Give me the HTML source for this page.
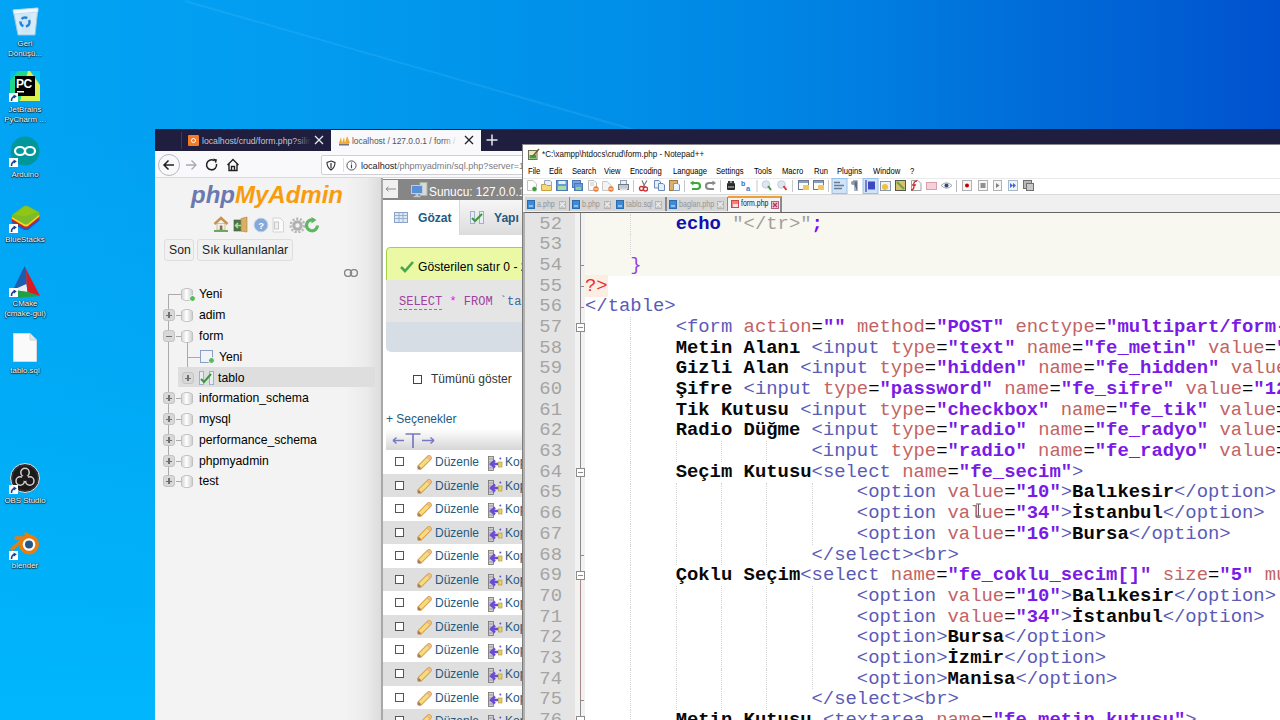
<!DOCTYPE html>
<html><head><meta charset="utf-8">
<style>
*{box-sizing:border-box;margin:0;padding:0}
html,body{width:1280px;height:720px;overflow:hidden}
body{position:relative;font-family:"Liberation Sans",sans-serif;background:#0a8ae2}
.A{position:absolute}
#bg{position:absolute;left:0;top:0;width:1280px;height:720px;
background:linear-gradient(180deg,rgba(0,180,250,0) 129px,rgba(0,176,248,.6) 400px,rgba(0,182,252,1) 720px) 0 0/155px 720px no-repeat,
linear-gradient(90deg,#02a4f4 0px,#029cf0 300px,#008ee8 640px,#0080e2 850px,#0070da 1000px,#0060d4 1150px,#0052ce 1280px);}
#bg2{display:none}
.streak{position:absolute;left:185px;top:0;width:470px;height:2px;background:rgba(150,220,255,.12);transform-origin:0 0;transform:rotate(16deg)}
.lbl{position:absolute;width:56px;left:-3px;text-align:center;color:#fff;font-size:7.9px;line-height:10px;text-shadow:0 0 1px rgba(0,0,0,.9),0 1px 1px rgba(0,0,0,.8),1px 0 1px rgba(0,0,0,.5)}
.sc{position:absolute;width:8px;height:8px;background:#fff;border:.5px solid #e0e0e0}
.sc:after{content:"";position:absolute;left:1.5px;top:1px;width:4px;height:4px;border-top:1.6px solid #1a3f94;border-right:1.6px solid #1a3f94;border-radius:0 3px 0 0}
/* browser */
.mono{font-family:"Liberation Mono",monospace}
/* npp */
.npp-font{font-family:"Liberation Sans",sans-serif}
#code{position:absolute;left:585px;top:213.5px;font-family:"Liberation Mono",monospace;font-size:18.89px;line-height:20.69px;white-space:pre;color:#000}
#nums{position:absolute;left:520px;width:42px;top:213.5px;font-family:"Liberation Mono",monospace;font-size:18.89px;line-height:20.69px;white-space:pre;color:#a4a4a4;text-align:right}
.t{color:#5a5ab8}.a{color:#c26464}.s{color:#7a1ae6;font-weight:bold}.b{font-weight:bold;color:#080808}.g{color:#a0a0a0}
.k{color:#1010b0;font-weight:bold}.sb{color:#8000ff;font-weight:bold}.pu{color:#9040e0}.pe{color:#e83030;background:#fdeee4}
.gd{position:absolute;width:0;height:20.69px;border-left:1px dotted #d4d4d4}
.fk{position:absolute;left:580px;width:4px;height:1px;background:#8c8c8c}
.fb{position:absolute;left:576px;width:9px;height:9px;border:1px solid #8c8c8c;background:#fff}
.fb:after{content:"";position:absolute;left:1px;top:3px;width:5px;height:1px;background:#8c8c8c}
.mi{position:absolute;top:165px;font-size:8.9px;color:#000;line-height:12px;transform:scaleX(.86);transform-origin:0 0;white-space:nowrap}
.ti{position:absolute;width:12px;height:11px;top:180px}
.sep{position:absolute;top:179px;width:1px;height:13px;background:#c8c8c8}
.ntab{position:absolute;top:197px;height:14px;background:#d6d6d6;font-size:8.4px;color:#949494;line-height:14px;white-space:nowrap}
.ntab:after{content:"";position:absolute;right:-2px;top:0;width:2px;height:14px;background:#8a8a8a}
.ntab i{position:absolute;left:1.5px;top:3px;width:8px;height:8.5px;background:#3d8ad8;border:1px solid #2a6cb0}
.ntab i:after{content:"";position:absolute;left:1px;top:3.5px;width:4px;height:2.5px;background:#8cc0f0}
.ntab span{position:absolute;left:11.5px;top:0;transform:scaleX(.85);transform-origin:0 0}
.ntab b{position:absolute;right:3px;top:4px;width:7.5px;height:7.5px;background:#c8c8c8;border:1px solid #b4b4b4}
.ntab b:before,.ntab b:after{content:"";position:absolute;left:-0.5px;top:2.2px;width:6.5px;height:1.3px;background:#f4f4f4;transform:rotate(45deg)}
.ntab b:after{transform:rotate(-45deg)}
.tree{position:absolute;font-size:12.2px;color:#000;line-height:14px;white-space:nowrap}
.pm{position:absolute;width:12px;height:12px;border-radius:3px;background:#d8d8d8;border:1px solid #c4c4c4}
.pm:before{content:"";position:absolute;left:2px;top:4.5px;width:6px;height:1.6px;background:#707070}
.pm.p:after{content:"";position:absolute;left:4.2px;top:2.2px;width:1.6px;height:6px;background:#707070}
.cyl{position:absolute;width:12px;height:13px;background:linear-gradient(90deg,#d8d8d8,#fff 45%,#d0d0d0);border:1px solid #c0c0c0;border-radius:6px/3px}
.row{position:absolute;left:383px;width:140px;height:23.6px}
.row .cb{position:absolute;left:12px;top:7px;width:9px;height:9px;border:1px solid #555;background:#fff}
.row .pen{position:absolute;left:35px;top:5px;width:4px;height:16px;background:linear-gradient(90deg,#f0b83c,#f8d878);transform:rotate(45deg);border-radius:1px}
.row .dz{position:absolute;left:52px;top:5px;font-size:12px;color:#235a81;line-height:15px}
.row .cp{position:absolute;left:105px;top:5px;width:13px;height:14px}
.row .kp{position:absolute;left:122px;top:5px;font-size:12px;color:#235a81;line-height:15px}
</style></head><body>
<div id="bg"></div><div id="bg2"></div><div class="streak"></div>

<!-- desktop icons -->
<div class="A" style="left:0;top:0;width:54px;height:580px">
  <!-- recycle bin -->
  <svg class="A" style="left:11px;top:5px" width="30" height="31" viewBox="0 0 30 31">
    <path d="M2 5 L27 3 L24 30 L7 30 Z" fill="#d6ecf8" stroke="#9cc4dc" stroke-width="1"/>
    <path d="M2 5 L27 3 L27 7 L3 9Z" fill="#eef8fd" stroke="#b0d0e4" stroke-width=".6"/>
    <path d="M9 10 L20 9 L19 28 L11 28Z" fill="#c4e2f4" opacity=".6"/>
    <circle cx="14" cy="17" r="4.5" fill="none" stroke="#2a80d8" stroke-width="2.4" stroke-dasharray="6 2.5"/>
  </svg>
  <div class="lbl" style="top:39px">Geri<br>Dönüşü...</div>
  <!-- pycharm -->
  <svg class="A" style="left:10px;top:71px" width="30" height="30" viewBox="0 0 30 30">
    <rect x="0" y="0" width="30" height="30" fill="#21d789"/>
    <path d="M18 0 L30 0 L30 30 L10 30Z" fill="#dcf050"/>
    <path d="M20 0 L30 0 L30 14Z" fill="#07c3f2"/>
    <path d="M0 0 L8 0 L0 10Z" fill="#07b8f0"/>
    <rect x="5" y="5" width="20" height="20" fill="#000"/>
    <text x="6" y="17" font-family="Liberation Sans" font-weight="bold" font-size="12" fill="#fff" letter-spacing="-0.5">PC</text>
    <rect x="7" y="20" width="7" height="1.5" fill="#fff"/>
  </svg>
  <svg class="A" style="left:9px;top:93px" width="9" height="9" viewBox="0 0 9 9"><rect x="0" y="0" width="9" height="9" fill="#fff"/><path d="M2.5 8 Q2.5 4 5.5 3.5" fill="none" stroke="#1a3f94" stroke-width="1.6"/><path d="M4.5 1.5 L7.8 3.2 L4.8 5.8Z" fill="#1a3f94"/></svg>
  <div class="lbl" style="top:105px">JetBrains<br>PyCharm ...</div>
  <!-- arduino -->
  <svg class="A" style="left:10px;top:136px" width="30" height="30" viewBox="0 0 30 30">
    <circle cx="15" cy="15" r="14.5" fill="#00979c"/>
    <ellipse cx="10" cy="15" rx="5" ry="4" fill="none" stroke="#fff" stroke-width="2.2"/>
    <ellipse cx="20" cy="15" rx="5" ry="4" fill="none" stroke="#fff" stroke-width="2.2"/>
  </svg>
  <svg class="A" style="left:9px;top:158px" width="9" height="9" viewBox="0 0 9 9"><rect x="0" y="0" width="9" height="9" fill="#fff"/><path d="M2.5 8 Q2.5 4 5.5 3.5" fill="none" stroke="#1a3f94" stroke-width="1.6"/><path d="M4.5 1.5 L7.8 3.2 L4.8 5.8Z" fill="#1a3f94"/></svg>
  <div class="lbl" style="top:170px">Arduino</div>
  <!-- bluestacks -->
  <svg class="A" style="left:10px;top:202px" width="31" height="28" viewBox="0 0 31 28">
    <path d="M2 15 Q1 13 3 12 L14 4 Q16 3 18 4 L29 10 Q30 12 29 13 L18 22 Q16 23 14 22Z" transform="translate(0,6)" fill="#1a5ad8"/>
    <path d="M2 15 Q1 13 3 12 L14 4 Q16 3 18 4 L29 10 Q30 12 29 13 L18 22 Q16 23 14 22Z" transform="translate(0,4)" fill="#d42020"/>
    <path d="M2 15 Q1 13 3 12 L14 4 Q16 3 18 4 L29 10 Q30 12 29 13 L18 22 Q16 23 14 22Z" transform="translate(0,2)" fill="#f8d820"/>
    <path d="M2 15 Q1 13 3 12 L14 4 Q16 3 18 4 L29 10 Q30 12 29 13 L18 22 Q16 23 14 22Z" fill="#7cbc28"/>
    <path d="M4 13 L14 5 Q16 4 18 5 L27 10 L16 14Z" fill="#98cc10" opacity=".7"/>
  </svg>
  <svg class="A" style="left:9px;top:224px" width="9" height="9" viewBox="0 0 9 9"><rect x="0" y="0" width="9" height="9" fill="#fff"/><path d="M2.5 8 Q2.5 4 5.5 3.5" fill="none" stroke="#1a3f94" stroke-width="1.6"/><path d="M4.5 1.5 L7.8 3.2 L4.8 5.8Z" fill="#1a3f94"/></svg>
  <div class="lbl" style="top:235px">BlueStacks</div>
  <!-- cmake -->
  <svg class="A" style="left:10px;top:266px" width="32" height="32" viewBox="0 0 32 32">
    <path d="M14.5 0 L16 3 L16.5 18 L3 24Z" fill="#1f5cb0"/>
    <path d="M3 24 L16.5 18 L17.5 26Z" fill="#e8eef4"/>
    <path d="M16 3 L30 30 L17.5 26 L16.5 18Z" fill="#d81c24"/>
    <path d="M5 24 L17.5 26 L30 30 L7 32Z" fill="#23a041"/>
  </svg>
  <svg class="A" style="left:9px;top:288px" width="9" height="9" viewBox="0 0 9 9"><rect x="0" y="0" width="9" height="9" fill="#fff"/><path d="M2.5 8 Q2.5 4 5.5 3.5" fill="none" stroke="#1a3f94" stroke-width="1.6"/><path d="M4.5 1.5 L7.8 3.2 L4.8 5.8Z" fill="#1a3f94"/></svg>
  <div class="lbl" style="top:299px">CMake<br>(cmake-gui)</div>
  <!-- tablo.sql -->
  <svg class="A" style="left:13px;top:333px" width="24" height="29" viewBox="0 0 24 29">
    <path d="M0.5 0.5 L17 0.5 L23.5 7 L23.5 28.5 L0.5 28.5Z" fill="#fafafa" stroke="#d8d8d8"/>
    <path d="M17 0.5 L17 7 L23.5 7" fill="#e6e6e6" stroke="#d0d0d0"/>
  </svg>
  <div class="lbl" style="top:366px">tablo.sql</div>
  <!-- OBS -->
  <svg class="A" style="left:10px;top:463px" width="30" height="30" viewBox="0 0 30 30">
    <circle cx="15" cy="15" r="14.5" fill="#302e31" stroke="#e0e0e0" stroke-width="1"/>
    <circle cx="15" cy="15" r="12" fill="#1a1a1a"/>
    <circle cx="15" cy="9.5" r="4.2" fill="none" stroke="#d0d0d0" stroke-width="1.5"/><circle cx="10.2" cy="18" r="4.2" fill="none" stroke="#d0d0d0" stroke-width="1.5"/><circle cx="19.8" cy="18" r="4.2" fill="none" stroke="#d0d0d0" stroke-width="1.5"/><circle cx="15" cy="15" r="3" fill="#1a1a1a"/>
  </svg>
  <svg class="A" style="left:9px;top:485px" width="9" height="9" viewBox="0 0 9 9"><rect x="0" y="0" width="9" height="9" fill="#fff"/><path d="M2.5 8 Q2.5 4 5.5 3.5" fill="none" stroke="#1a3f94" stroke-width="1.6"/><path d="M4.5 1.5 L7.8 3.2 L4.8 5.8Z" fill="#1a3f94"/></svg>
  <div class="lbl" style="top:496px">OBS Studio</div>
  <!-- blender -->
  <svg class="A" style="left:5px;top:525px" width="40" height="32" viewBox="0 0 40 32">
    <path d="M7 24 L16 16 M11 13 H25 M21 9 L29 14" stroke="#e87d0d" stroke-width="3.4" stroke-linecap="round"/>
    <circle cx="24" cy="19.5" r="10" fill="#e87d0d"/>
    <circle cx="24" cy="19.5" r="6.3" fill="#fff"/>
    <circle cx="24" cy="19.5" r="4" fill="#265787"/>
  </svg>
  <svg class="A" style="left:9px;top:551px" width="9" height="9" viewBox="0 0 9 9"><rect x="0" y="0" width="9" height="9" fill="#fff"/><path d="M2.5 8 Q2.5 4 5.5 3.5" fill="none" stroke="#1a3f94" stroke-width="1.6"/><path d="M4.5 1.5 L7.8 3.2 L4.8 5.8Z" fill="#1a3f94"/></svg>
  <div class="lbl" style="top:561px">blender</div>
</div>

<!-- ================= BROWSER ================= -->
<div class="A" style="left:155px;top:129px;width:1125px;height:591px;background:#f3f3f3;overflow:hidden">
  <!-- tab strip -->
  <div class="A" style="left:0;top:0;width:1125px;height:22px;background:#1f1e3e"></div>
  <div class="A" style="left:26px;top:3px;width:1px;height:17px;background:#3a3958"></div>
  <!-- tab 1 -->
  <div class="A" style="left:33px;top:6px;width:11px;height:11px;background:#f07c2c;border-radius:1px"></div>
  <div class="A" style="left:36px;top:9px;width:5px;height:5px;border:1px solid #fff;border-radius:50%"></div>
  <div class="A" style="left:47px;top:5px;width:110px;height:14px;overflow:hidden;font-size:8.7px;line-height:14px;color:#c4c4d0;white-space:nowrap">localhost/crud/form.php?siline</div>
  <div class="A" style="left:140px;top:5px;width:18px;height:14px;background:linear-gradient(90deg,rgba(31,30,62,0),#1f1e3e 90%)"></div>
  <svg class="A" style="left:159px;top:6px" width="10" height="10" viewBox="0 0 10 10"><path d="M1 1 L9 9 M9 1 L1 9" stroke="#e8e8f0" stroke-width="1.3"/></svg>
  <!-- active tab -->
  <div class="A" style="left:176px;top:1px;width:150px;height:22px;background:#f9f9fb"></div>
  <svg class="A" style="left:182px;top:6px" width="14" height="11" viewBox="0 0 14 11"><path d="M2 8 L4 2 L5 8Z M5 8 L7 2 L8 8Z M8 8 L10 1 L13 8Z" fill="#f0a830"/><rect x="2" y="8.5" width="10" height="2" fill="#505060" opacity=".8"/></svg>
  <div class="A" style="left:197px;top:5px;width:108px;height:14px;overflow:hidden;font-size:8.4px;line-height:14px;color:#55555c;white-space:nowrap">localhost / 127.0.0.1 / form / tablo</div>
  <div class="A" style="left:288px;top:5px;width:18px;height:14px;background:linear-gradient(90deg,rgba(249,249,251,0),#f9f9fb 85%)"></div>
  <svg class="A" style="left:309px;top:6px" width="10" height="10" viewBox="0 0 10 10"><path d="M1 1 L9 9 M9 1 L1 9" stroke="#20202a" stroke-width="1.3"/></svg>
  <svg class="A" style="left:331px;top:5px" width="12" height="12" viewBox="0 0 12 12"><path d="M6 0.5 V11.5 M0.5 6 H11.5" stroke="#e8e8f0" stroke-width="1.5"/></svg>
  <!-- toolbar -->
  <div class="A" style="left:0;top:22px;width:1125px;height:27px;background:#f9f9fb;border-bottom:1px solid #dadade"></div>
  <div class="A" style="left:3px;top:25px;width:22px;height:22px;border:1px solid #b8b8c0;border-radius:50%"></div>
  <svg class="A" style="left:6px;top:28px" width="16" height="16" viewBox="0 0 16 16"><path d="M13 8 H3 M7.5 3.5 L3 8 L7.5 12.5" fill="none" stroke="#202020" stroke-width="1.5"/></svg>
  <svg class="A" style="left:28px;top:28px" width="16" height="16" viewBox="0 0 16 16"><path d="M3 8 H13 M8.5 3.5 L13 8 L8.5 12.5" fill="none" stroke="#a8a8b0" stroke-width="1.3"/></svg>
  <svg class="A" style="left:49px;top:28px" width="16" height="16" viewBox="0 0 16 16"><path d="M12.5 7 A5 5 0 1 1 10 3.5" fill="none" stroke="#202020" stroke-width="1.5"/><path d="M9 1.5 L13 2.5 L12 6.5Z" fill="#202020"/></svg>
  <svg class="A" style="left:70px;top:28px" width="16" height="16" viewBox="0 0 16 16"><path d="M2.5 8 L8 2.5 L13.5 8 M4 7 V13.5 H12 V7 M6.5 13.5 V9.5 H9.5 V13.5" fill="none" stroke="#202020" stroke-width="1.4"/></svg>
  <!-- url bar -->
  <div class="A" style="left:166px;top:26px;width:1000px;height:20px;background:#fff;border:1px solid #cfcfd6;border-radius:2px"></div>
  <div class="A" style="left:188px;top:29px;width:1px;height:14px;background:#e0e0e4"></div>
  <svg class="A" style="left:171px;top:31px" width="10" height="11" viewBox="0 0 10 11"><path d="M5 1 L9 2.5 Q9 7.5 5 10 Q1 7.5 1 2.5Z" fill="none" stroke="#303038" stroke-width="1.1"/><path d="M5 3 V8.5" stroke="#303038" stroke-width="1.2"/></svg>
  <svg class="A" style="left:190.5px;top:31px" width="11" height="11" viewBox="0 0 11 11"><circle cx="5.5" cy="5.5" r="4.6" fill="none" stroke="#404048" stroke-width=".9"/><path d="M5.5 4.5 V8.3 M5.5 2.5 V3.4" stroke="#404048" stroke-width="1.1"/></svg>
  <div class="A" style="left:206px;top:30px;font-size:9.1px;line-height:15px;color:#202028;white-space:nowrap">localhost<span style="color:#7a7a84">/phpmyadmin/sql.php?server=1&amp;db=form</span></div>

  <!-- content -->
  <div class="A" style="left:0;top:49px;width:227px;height:542px;background:#f3f3f3"></div>
  <div class="A" style="left:190px;top:49px;width:36px;height:542px;background:linear-gradient(90deg,rgba(20,20,40,0),rgba(20,20,40,.035) 60%,rgba(20,20,40,.1))"></div>
  <div class="A" style="left:226px;top:49px;width:2px;height:542px;background:#a8a8a8"></div>
</div>

<!-- phpMyAdmin left -->
<div class="A" style="left:191px;top:181px;font-size:24px;line-height:28px;font-weight:bold;font-style:italic;letter-spacing:0px;white-space:nowrap"><span style="color:#6c78af">php</span><span style="color:#f89c0e">MyAdmin</span></div>
<!-- pma icons -->
<svg class="A" style="left:213px;top:216px" width="108" height="17" viewBox="0 0 108 17">
  <path d="M1.5 8 L8 2 L14.5 8" fill="none" stroke="#c8924e" stroke-width="2.4"/><rect x="4" y="7.5" width="8" height="6.5" fill="#f6f0e4" stroke="#c0a070" stroke-width=".6"/><rect x="6.8" y="9.5" width="2.6" height="4.5" fill="#807060"/><rect x="1" y="14" width="14" height="2" fill="#6aaa58"/>
  <rect x="21" y="4" width="8" height="11" fill="#4a7a44" stroke="#505050" stroke-width=".6"/><path d="M28 2.5 L34 1 V16 L28 15Z" fill="#dcae62" stroke="#b08040" stroke-width=".6"/><path d="M22.5 9.5 H28 M25 7 L22.5 9.5 L25 12" stroke="#a8e0a0" stroke-width="1.6" fill="none"/>
  <circle cx="48" cy="9" r="6.8" fill="#86a8d8" stroke="#b8cce8" stroke-width="1"/><text x="45.2" y="12.8" font-size="9.5" font-weight="bold" fill="#fff" font-family="Liberation Sans">?</text>
  <path d="M60 2 H67 L70.5 5.5 V16 H60Z" fill="#fafafa" stroke="#d4d4d4"/><rect x="61.5" y="6" width="4" height="7" fill="#f0f0f0" stroke="#c8c8c8"/>
  <circle cx="84.5" cy="9.5" r="5.2" fill="#b0b0b0"/><circle cx="84.5" cy="9.5" r="6.8" fill="none" stroke="#b8b8b8" stroke-width="2.4" stroke-dasharray="2.2 1.6"/><circle cx="84.5" cy="9.5" r="2.2" fill="#f0f0f0"/>
  <path d="M104.5 9.5 A5.5 5.5 0 1 1 100.5 4" fill="none" stroke="#5cb860" stroke-width="3.2"/><path d="M98.5 1 L103.5 4 L98.5 7.5Z" fill="#5cb860"/>
</svg>
<div class="A" style="left:164px;top:239px;width:30px;height:22px;background:#f1f1f1;border:1px solid #dedede;border-radius:3px"></div>
<div class="A" style="left:169px;top:243px;font-size:12.2px;line-height:15px;color:#222">Son</div>
<div class="A" style="left:197px;top:239px;width:96px;height:22px;background:#f1f1f1;border:1px solid #dedede;border-radius:3px"></div>
<div class="A" style="left:202px;top:243px;font-size:12.2px;line-height:15px;color:#222;white-space:nowrap">Sık kullanılanlar</div>
<svg class="A" style="left:344px;top:269px" width="14" height="8" viewBox="0 0 14 8"><rect x="0.5" y="0.5" width="7" height="7" rx="3.5" fill="none" stroke="#888" stroke-width="1.6"/><rect x="6.5" y="0.5" width="7" height="7" rx="3.5" fill="none" stroke="#888" stroke-width="1.6"/></svg>

<!-- tree -->
<div class="A" style="left:168px;top:294px;width:1px;height:188px;background:#aaaaaa"></div>
<div class="A" style="left:168px;top:294px;width:13px;height:1px;background:#aaaaaa"></div>
<div class="A" style="left:176px;top:315px;width:5px;height:1px;background:#aaaaaa"></div>
<div class="A" style="left:176px;top:336px;width:5px;height:1px;background:#aaaaaa"></div>
<div class="A" style="left:176px;top:398px;width:5px;height:1px;background:#aaaaaa"></div>
<div class="A" style="left:176px;top:419px;width:5px;height:1px;background:#aaaaaa"></div>
<div class="A" style="left:176px;top:440px;width:5px;height:1px;background:#aaaaaa"></div>
<div class="A" style="left:176px;top:461px;width:5px;height:1px;background:#aaaaaa"></div>
<div class="A" style="left:176px;top:481px;width:5px;height:1px;background:#aaaaaa"></div>
<div class="A" style="left:187px;top:343px;width:1px;height:35px;background:#aaaaaa"></div>
<div class="A" style="left:187px;top:357px;width:13px;height:1px;background:#aaaaaa"></div>
<div class="A" style="left:178px;top:367px;width:197px;height:20px;background:#dedede"></div>

<div class="cyl" style="left:181px;top:288px"></div><div class="A" style="left:189px;top:295px;width:7px;height:7px;border-radius:50%;background:#5cb85c;border:1.5px solid #fff"></div>
<div class="tree" style="left:199px;top:287px">Yeni</div>
<div class="pm p" style="left:163px;top:309px"></div><div class="cyl" style="left:181px;top:309px"></div><div class="tree" style="left:199px;top:308px">adim</div>
<div class="pm" style="left:163px;top:330px"></div><div class="cyl" style="left:181px;top:330px"></div><div class="tree" style="left:199px;top:329px">form</div>
<div class="A" style="left:200px;top:350px;width:13px;height:13px;background:#f0f4fa;border:1px solid #8aa0c0"></div><div class="A" style="left:208px;top:357px;width:7px;height:7px;border-radius:50%;background:#5cb85c;border:1.5px solid #fff"></div>
<div class="tree" style="left:219px;top:350px">Yeni</div>
<div class="pm p" style="left:182px;top:372px"></div>
<svg class="A" style="left:199px;top:371px" width="15" height="14" viewBox="0 0 15 14"><rect x="0.5" y="0.5" width="4" height="13" fill="#e8eef8" stroke="#a0b0c8"/><rect x="10.5" y="0.5" width="4" height="13" fill="#e8eef8" stroke="#a0b0c8"/><path d="M2 8 L5 11 L12 3" fill="none" stroke="#3a9a3a" stroke-width="2"/></svg>
<div class="tree" style="left:218px;top:371px">tablo</div>
<div class="pm p" style="left:163px;top:392px"></div><div class="cyl" style="left:181px;top:392px"></div><div class="tree" style="left:199px;top:391px">information_schema</div>
<div class="pm p" style="left:163px;top:413px"></div><div class="cyl" style="left:181px;top:413px"></div><div class="tree" style="left:199px;top:412px">mysql</div>
<div class="pm p" style="left:163px;top:434px"></div><div class="cyl" style="left:181px;top:434px"></div><div class="tree" style="left:199px;top:433px">performance_schema</div>
<div class="pm p" style="left:163px;top:455px"></div><div class="cyl" style="left:181px;top:455px"></div><div class="tree" style="left:199px;top:454px">phpmyadmin</div>
<div class="pm p" style="left:163px;top:475px"></div><div class="cyl" style="left:181px;top:475px"></div><div class="tree" style="left:199px;top:474px">test</div>

<!-- pma right content -->
<div class="A" style="left:383px;top:178px;width:140px;height:542px;background:#fff;overflow:hidden">
  <div class="A" style="left:0;top:1px;width:140px;height:21px;background:#868686"></div>
  <div class="A" style="left:0;top:2px;width:15px;height:18px;background:#f0f0f0"></div>
  <svg class="A" style="left:2px;top:7px" width="12" height="8" viewBox="0 0 12 8"><path d="M1 4 H11 M1 4 L3.5 1.8 M1 4 L3.5 6.2" stroke="#8a8a8a" stroke-width="1" fill="none"/></svg>
  <svg class="A" style="left:28px;top:4px" width="17" height="16" viewBox="0 0 17 16"><rect x="9" y="0.5" width="7" height="13" fill="#d8dcd8" stroke="#a8b0a8"/><rect x="0.5" y="3.5" width="11" height="8" fill="#5a90d8" stroke="#c0ccd8"/><rect x="4.5" y="12" width="3" height="2" fill="#c0c8d0"/><rect x="2.5" y="14" width="7" height="1.2" fill="#c0c8d0"/></svg>
  <div class="A" style="left:45.5px;top:4.5px;font-size:13.2px;line-height:18px;color:#fff;white-space:nowrap;transform:scaleX(.9);transform-origin:0 0">Sunucu: 127.0.0.1</div>
  <div class="A" style="left:76px;top:22px;width:70px;height:35px;background:linear-gradient(180deg,#f6f6f6,#dcdcdc);border-left:1px solid #d8d8d8"></div>
  <svg class="A" style="left:11px;top:34px" width="14" height="11" viewBox="0 0 14 11"><rect x=".5" y=".5" width="13" height="10" fill="#dde8f4" stroke="#8aa4c8"/><path d="M.5 3.5 H13.5 M.5 6.5 H13.5 M5 .5 V10.5 M9 .5 V10.5" stroke="#8aa4c8" stroke-width=".8"/></svg>
  <div class="A" style="left:35px;top:33px;font-size:12.1px;line-height:15px;color:#235a81;font-weight:bold">Gözat</div>
  <svg class="A" style="left:87px;top:33px" width="14" height="13" viewBox="0 0 14 13"><rect x=".5" y=".5" width="4" height="12" fill="#e8eef8" stroke="#a0b0c8"/><rect x="9.5" y=".5" width="4" height="12" fill="#e8eef8" stroke="#a0b0c8"/><path d="M2 7 L5 10 L12 3" fill="none" stroke="#3a9a3a" stroke-width="2"/></svg>
  <div class="A" style="left:111px;top:33px;font-size:12.1px;line-height:15px;color:#235a81;font-weight:bold">Yapı</div>
  <div class="A" style="left:3px;top:69px;width:140px;height:34px;background:#ebf8a4;border:1px solid #a2d246;border-radius:4px 0 0 0"></div>
  <svg class="A" style="left:17px;top:83px" width="14" height="12" viewBox="0 0 14 12"><path d="M1 6 L5 10 L13 1" fill="none" stroke="#4aa84a" stroke-width="2.6"/></svg>
  <div class="A" style="left:35px;top:82px;font-size:12.1px;line-height:15px;color:#000;white-space:nowrap">Gösterilen satır 0 - 24</div>
  <div class="A" style="left:3px;top:102px;width:140px;height:42px;background:#e5e5e5"></div>
  <div class="A" style="left:3px;top:144px;width:140px;height:30px;background:#d7dde4;border-radius:0 0 0 5px"></div>
  <div class="A" style="left:16px;top:117px;font-family:'Liberation Mono',monospace;font-size:12px;line-height:14px;color:#a040a0;white-space:nowrap">SELECT <span style="color:#ff00ff">*</span> FROM <span style="color:#3a6aa0">`tablo`</span></div>
  <div class="A" style="left:16px;top:131px;width:43px;height:0;border-top:1px dashed #a070a0"></div>
  <div class="A" style="left:30px;top:197px;width:9px;height:9px;border:1px solid #444;background:#fff"></div>
  <div class="A" style="left:48px;top:194px;font-size:12px;line-height:15px;color:#333;white-space:nowrap">Tümünü göster</div>
  <div class="A" style="left:3px;top:234px;font-size:12px;line-height:15px;color:#235a81;white-space:nowrap">+ Seçenekler</div>
  <div class="A" style="left:3px;top:251px;width:140px;height:21px;background:linear-gradient(180deg,#ffffff,#d6d6d6)"></div>
  <svg class="A" style="left:9px;top:253px" width="46" height="18" viewBox="0 0 46 18"><path d="M1 9.5 H12 M1 9.5 L4.5 6.5 M1 9.5 L4.5 12.5" stroke="#7878c0" stroke-width="1.5" fill="none"/><path d="M13.5 3 H28.5 M21 3 V17" stroke="#7878c0" stroke-width="1.7" fill="none"/><path d="M30 9.5 H42 M42 9.5 L38.5 6.5 M42 9.5 L38.5 12.5" stroke="#7878c0" stroke-width="1.5" fill="none"/></svg>
</div>
<div class="row" style="top:450.0px;background:#ffffff"><div class="cb"></div><svg class="A" style="left:33px;top:5px" width="16" height="16" viewBox="0 0 16 16"><path d="M4 12 L13 3" stroke="#d8a040" stroke-width="5.5" stroke-linecap="round"/><path d="M4 12 L13 3" stroke="#f6dc80" stroke-width="3.6" stroke-linecap="round"/><path d="M1.5 14.5 L2.5 10.5 L5.5 13.5Z" fill="#a87858"/><path d="M11.5 1.8 L14.2 4.5" stroke="#f0b0a0" stroke-width="2"/></svg><div class="dz">Düzenle</div><svg class="A" style="left:105px;top:6px" width="15" height="15" viewBox="0 0 15 15"><rect x="0.5" y="0.5" width="5" height="14" fill="#d0d0d0" stroke="#707070" stroke-width=".8"/><path d="M1 3 H5 M1 6 H5 M1 9 H5 M1 12 H5" stroke="#909090" stroke-width=".8"/><path d="M3 8 H10 M7 4.5 L3 8 L7 11.5" stroke="#6a4ad8" stroke-width="2.4" fill="none"/><rect x="10.5" y="6" width="3.5" height="5" fill="#e8d060" stroke="#a09040" stroke-width=".6"/><circle cx="12.3" cy="2.5" r="1" fill="#5a5ad0"/></svg><div class="kp">Kopyala</div></div>
<div class="row" style="top:473.6px;background:#dfdfdf"><div class="cb"></div><svg class="A" style="left:33px;top:5px" width="16" height="16" viewBox="0 0 16 16"><path d="M4 12 L13 3" stroke="#d8a040" stroke-width="5.5" stroke-linecap="round"/><path d="M4 12 L13 3" stroke="#f6dc80" stroke-width="3.6" stroke-linecap="round"/><path d="M1.5 14.5 L2.5 10.5 L5.5 13.5Z" fill="#a87858"/><path d="M11.5 1.8 L14.2 4.5" stroke="#f0b0a0" stroke-width="2"/></svg><div class="dz">Düzenle</div><svg class="A" style="left:105px;top:6px" width="15" height="15" viewBox="0 0 15 15"><rect x="0.5" y="0.5" width="5" height="14" fill="#d0d0d0" stroke="#707070" stroke-width=".8"/><path d="M1 3 H5 M1 6 H5 M1 9 H5 M1 12 H5" stroke="#909090" stroke-width=".8"/><path d="M3 8 H10 M7 4.5 L3 8 L7 11.5" stroke="#6a4ad8" stroke-width="2.4" fill="none"/><rect x="10.5" y="6" width="3.5" height="5" fill="#e8d060" stroke="#a09040" stroke-width=".6"/><circle cx="12.3" cy="2.5" r="1" fill="#5a5ad0"/></svg><div class="kp">Kopyala</div></div>
<div class="row" style="top:497.1px;background:#ffffff"><div class="cb"></div><svg class="A" style="left:33px;top:5px" width="16" height="16" viewBox="0 0 16 16"><path d="M4 12 L13 3" stroke="#d8a040" stroke-width="5.5" stroke-linecap="round"/><path d="M4 12 L13 3" stroke="#f6dc80" stroke-width="3.6" stroke-linecap="round"/><path d="M1.5 14.5 L2.5 10.5 L5.5 13.5Z" fill="#a87858"/><path d="M11.5 1.8 L14.2 4.5" stroke="#f0b0a0" stroke-width="2"/></svg><div class="dz">Düzenle</div><svg class="A" style="left:105px;top:6px" width="15" height="15" viewBox="0 0 15 15"><rect x="0.5" y="0.5" width="5" height="14" fill="#d0d0d0" stroke="#707070" stroke-width=".8"/><path d="M1 3 H5 M1 6 H5 M1 9 H5 M1 12 H5" stroke="#909090" stroke-width=".8"/><path d="M3 8 H10 M7 4.5 L3 8 L7 11.5" stroke="#6a4ad8" stroke-width="2.4" fill="none"/><rect x="10.5" y="6" width="3.5" height="5" fill="#e8d060" stroke="#a09040" stroke-width=".6"/><circle cx="12.3" cy="2.5" r="1" fill="#5a5ad0"/></svg><div class="kp">Kopyala</div></div>
<div class="row" style="top:520.6px;background:#dfdfdf"><div class="cb"></div><svg class="A" style="left:33px;top:5px" width="16" height="16" viewBox="0 0 16 16"><path d="M4 12 L13 3" stroke="#d8a040" stroke-width="5.5" stroke-linecap="round"/><path d="M4 12 L13 3" stroke="#f6dc80" stroke-width="3.6" stroke-linecap="round"/><path d="M1.5 14.5 L2.5 10.5 L5.5 13.5Z" fill="#a87858"/><path d="M11.5 1.8 L14.2 4.5" stroke="#f0b0a0" stroke-width="2"/></svg><div class="dz">Düzenle</div><svg class="A" style="left:105px;top:6px" width="15" height="15" viewBox="0 0 15 15"><rect x="0.5" y="0.5" width="5" height="14" fill="#d0d0d0" stroke="#707070" stroke-width=".8"/><path d="M1 3 H5 M1 6 H5 M1 9 H5 M1 12 H5" stroke="#909090" stroke-width=".8"/><path d="M3 8 H10 M7 4.5 L3 8 L7 11.5" stroke="#6a4ad8" stroke-width="2.4" fill="none"/><rect x="10.5" y="6" width="3.5" height="5" fill="#e8d060" stroke="#a09040" stroke-width=".6"/><circle cx="12.3" cy="2.5" r="1" fill="#5a5ad0"/></svg><div class="kp">Kopyala</div></div>
<div class="row" style="top:544.2px;background:#ffffff"><div class="cb"></div><svg class="A" style="left:33px;top:5px" width="16" height="16" viewBox="0 0 16 16"><path d="M4 12 L13 3" stroke="#d8a040" stroke-width="5.5" stroke-linecap="round"/><path d="M4 12 L13 3" stroke="#f6dc80" stroke-width="3.6" stroke-linecap="round"/><path d="M1.5 14.5 L2.5 10.5 L5.5 13.5Z" fill="#a87858"/><path d="M11.5 1.8 L14.2 4.5" stroke="#f0b0a0" stroke-width="2"/></svg><div class="dz">Düzenle</div><svg class="A" style="left:105px;top:6px" width="15" height="15" viewBox="0 0 15 15"><rect x="0.5" y="0.5" width="5" height="14" fill="#d0d0d0" stroke="#707070" stroke-width=".8"/><path d="M1 3 H5 M1 6 H5 M1 9 H5 M1 12 H5" stroke="#909090" stroke-width=".8"/><path d="M3 8 H10 M7 4.5 L3 8 L7 11.5" stroke="#6a4ad8" stroke-width="2.4" fill="none"/><rect x="10.5" y="6" width="3.5" height="5" fill="#e8d060" stroke="#a09040" stroke-width=".6"/><circle cx="12.3" cy="2.5" r="1" fill="#5a5ad0"/></svg><div class="kp">Kopyala</div></div>
<div class="row" style="top:567.8px;background:#dfdfdf"><div class="cb"></div><svg class="A" style="left:33px;top:5px" width="16" height="16" viewBox="0 0 16 16"><path d="M4 12 L13 3" stroke="#d8a040" stroke-width="5.5" stroke-linecap="round"/><path d="M4 12 L13 3" stroke="#f6dc80" stroke-width="3.6" stroke-linecap="round"/><path d="M1.5 14.5 L2.5 10.5 L5.5 13.5Z" fill="#a87858"/><path d="M11.5 1.8 L14.2 4.5" stroke="#f0b0a0" stroke-width="2"/></svg><div class="dz">Düzenle</div><svg class="A" style="left:105px;top:6px" width="15" height="15" viewBox="0 0 15 15"><rect x="0.5" y="0.5" width="5" height="14" fill="#d0d0d0" stroke="#707070" stroke-width=".8"/><path d="M1 3 H5 M1 6 H5 M1 9 H5 M1 12 H5" stroke="#909090" stroke-width=".8"/><path d="M3 8 H10 M7 4.5 L3 8 L7 11.5" stroke="#6a4ad8" stroke-width="2.4" fill="none"/><rect x="10.5" y="6" width="3.5" height="5" fill="#e8d060" stroke="#a09040" stroke-width=".6"/><circle cx="12.3" cy="2.5" r="1" fill="#5a5ad0"/></svg><div class="kp">Kopyala</div></div>
<div class="row" style="top:591.3px;background:#ffffff"><div class="cb"></div><svg class="A" style="left:33px;top:5px" width="16" height="16" viewBox="0 0 16 16"><path d="M4 12 L13 3" stroke="#d8a040" stroke-width="5.5" stroke-linecap="round"/><path d="M4 12 L13 3" stroke="#f6dc80" stroke-width="3.6" stroke-linecap="round"/><path d="M1.5 14.5 L2.5 10.5 L5.5 13.5Z" fill="#a87858"/><path d="M11.5 1.8 L14.2 4.5" stroke="#f0b0a0" stroke-width="2"/></svg><div class="dz">Düzenle</div><svg class="A" style="left:105px;top:6px" width="15" height="15" viewBox="0 0 15 15"><rect x="0.5" y="0.5" width="5" height="14" fill="#d0d0d0" stroke="#707070" stroke-width=".8"/><path d="M1 3 H5 M1 6 H5 M1 9 H5 M1 12 H5" stroke="#909090" stroke-width=".8"/><path d="M3 8 H10 M7 4.5 L3 8 L7 11.5" stroke="#6a4ad8" stroke-width="2.4" fill="none"/><rect x="10.5" y="6" width="3.5" height="5" fill="#e8d060" stroke="#a09040" stroke-width=".6"/><circle cx="12.3" cy="2.5" r="1" fill="#5a5ad0"/></svg><div class="kp">Kopyala</div></div>
<div class="row" style="top:614.9px;background:#dfdfdf"><div class="cb"></div><svg class="A" style="left:33px;top:5px" width="16" height="16" viewBox="0 0 16 16"><path d="M4 12 L13 3" stroke="#d8a040" stroke-width="5.5" stroke-linecap="round"/><path d="M4 12 L13 3" stroke="#f6dc80" stroke-width="3.6" stroke-linecap="round"/><path d="M1.5 14.5 L2.5 10.5 L5.5 13.5Z" fill="#a87858"/><path d="M11.5 1.8 L14.2 4.5" stroke="#f0b0a0" stroke-width="2"/></svg><div class="dz">Düzenle</div><svg class="A" style="left:105px;top:6px" width="15" height="15" viewBox="0 0 15 15"><rect x="0.5" y="0.5" width="5" height="14" fill="#d0d0d0" stroke="#707070" stroke-width=".8"/><path d="M1 3 H5 M1 6 H5 M1 9 H5 M1 12 H5" stroke="#909090" stroke-width=".8"/><path d="M3 8 H10 M7 4.5 L3 8 L7 11.5" stroke="#6a4ad8" stroke-width="2.4" fill="none"/><rect x="10.5" y="6" width="3.5" height="5" fill="#e8d060" stroke="#a09040" stroke-width=".6"/><circle cx="12.3" cy="2.5" r="1" fill="#5a5ad0"/></svg><div class="kp">Kopyala</div></div>
<div class="row" style="top:638.4px;background:#ffffff"><div class="cb"></div><svg class="A" style="left:33px;top:5px" width="16" height="16" viewBox="0 0 16 16"><path d="M4 12 L13 3" stroke="#d8a040" stroke-width="5.5" stroke-linecap="round"/><path d="M4 12 L13 3" stroke="#f6dc80" stroke-width="3.6" stroke-linecap="round"/><path d="M1.5 14.5 L2.5 10.5 L5.5 13.5Z" fill="#a87858"/><path d="M11.5 1.8 L14.2 4.5" stroke="#f0b0a0" stroke-width="2"/></svg><div class="dz">Düzenle</div><svg class="A" style="left:105px;top:6px" width="15" height="15" viewBox="0 0 15 15"><rect x="0.5" y="0.5" width="5" height="14" fill="#d0d0d0" stroke="#707070" stroke-width=".8"/><path d="M1 3 H5 M1 6 H5 M1 9 H5 M1 12 H5" stroke="#909090" stroke-width=".8"/><path d="M3 8 H10 M7 4.5 L3 8 L7 11.5" stroke="#6a4ad8" stroke-width="2.4" fill="none"/><rect x="10.5" y="6" width="3.5" height="5" fill="#e8d060" stroke="#a09040" stroke-width=".6"/><circle cx="12.3" cy="2.5" r="1" fill="#5a5ad0"/></svg><div class="kp">Kopyala</div></div>
<div class="row" style="top:662.0px;background:#dfdfdf"><div class="cb"></div><svg class="A" style="left:33px;top:5px" width="16" height="16" viewBox="0 0 16 16"><path d="M4 12 L13 3" stroke="#d8a040" stroke-width="5.5" stroke-linecap="round"/><path d="M4 12 L13 3" stroke="#f6dc80" stroke-width="3.6" stroke-linecap="round"/><path d="M1.5 14.5 L2.5 10.5 L5.5 13.5Z" fill="#a87858"/><path d="M11.5 1.8 L14.2 4.5" stroke="#f0b0a0" stroke-width="2"/></svg><div class="dz">Düzenle</div><svg class="A" style="left:105px;top:6px" width="15" height="15" viewBox="0 0 15 15"><rect x="0.5" y="0.5" width="5" height="14" fill="#d0d0d0" stroke="#707070" stroke-width=".8"/><path d="M1 3 H5 M1 6 H5 M1 9 H5 M1 12 H5" stroke="#909090" stroke-width=".8"/><path d="M3 8 H10 M7 4.5 L3 8 L7 11.5" stroke="#6a4ad8" stroke-width="2.4" fill="none"/><rect x="10.5" y="6" width="3.5" height="5" fill="#e8d060" stroke="#a09040" stroke-width=".6"/><circle cx="12.3" cy="2.5" r="1" fill="#5a5ad0"/></svg><div class="kp">Kopyala</div></div>
<div class="row" style="top:685.5px;background:#ffffff"><div class="cb"></div><svg class="A" style="left:33px;top:5px" width="16" height="16" viewBox="0 0 16 16"><path d="M4 12 L13 3" stroke="#d8a040" stroke-width="5.5" stroke-linecap="round"/><path d="M4 12 L13 3" stroke="#f6dc80" stroke-width="3.6" stroke-linecap="round"/><path d="M1.5 14.5 L2.5 10.5 L5.5 13.5Z" fill="#a87858"/><path d="M11.5 1.8 L14.2 4.5" stroke="#f0b0a0" stroke-width="2"/></svg><div class="dz">Düzenle</div><svg class="A" style="left:105px;top:6px" width="15" height="15" viewBox="0 0 15 15"><rect x="0.5" y="0.5" width="5" height="14" fill="#d0d0d0" stroke="#707070" stroke-width=".8"/><path d="M1 3 H5 M1 6 H5 M1 9 H5 M1 12 H5" stroke="#909090" stroke-width=".8"/><path d="M3 8 H10 M7 4.5 L3 8 L7 11.5" stroke="#6a4ad8" stroke-width="2.4" fill="none"/><rect x="10.5" y="6" width="3.5" height="5" fill="#e8d060" stroke="#a09040" stroke-width=".6"/><circle cx="12.3" cy="2.5" r="1" fill="#5a5ad0"/></svg><div class="kp">Kopyala</div></div>
<div class="row" style="top:709.0px;background:#dfdfdf"><div class="cb"></div><svg class="A" style="left:33px;top:5px" width="16" height="16" viewBox="0 0 16 16"><path d="M4 12 L13 3" stroke="#d8a040" stroke-width="5.5" stroke-linecap="round"/><path d="M4 12 L13 3" stroke="#f6dc80" stroke-width="3.6" stroke-linecap="round"/><path d="M1.5 14.5 L2.5 10.5 L5.5 13.5Z" fill="#a87858"/><path d="M11.5 1.8 L14.2 4.5" stroke="#f0b0a0" stroke-width="2"/></svg><div class="dz">Düzenle</div><svg class="A" style="left:105px;top:6px" width="15" height="15" viewBox="0 0 15 15"><rect x="0.5" y="0.5" width="5" height="14" fill="#d0d0d0" stroke="#707070" stroke-width=".8"/><path d="M1 3 H5 M1 6 H5 M1 9 H5 M1 12 H5" stroke="#909090" stroke-width=".8"/><path d="M3 8 H10 M7 4.5 L3 8 L7 11.5" stroke="#6a4ad8" stroke-width="2.4" fill="none"/><rect x="10.5" y="6" width="3.5" height="5" fill="#e8d060" stroke="#a09040" stroke-width=".6"/><circle cx="12.3" cy="2.5" r="1" fill="#5a5ad0"/></svg><div class="kp">Kopyala</div></div>

<!-- ================= NOTEPAD++ ================= -->
<div class="A" style="left:522px;top:144px;width:758px;height:576px;background:#fff;border-left:1px solid #7c7c7c;border-top:1px solid #8a8a8a"></div>
<!-- title -->
<svg class="A" style="left:528px;top:148px" width="12" height="12" viewBox="0 0 12 12"><rect x=".5" y="2.5" width="8.5" height="9" fill="#e8e8c8" stroke="#707050"/><rect x="1.5" y="7" width="6.5" height="3.5" fill="#40a040"/><path d="M5 8 L11 1" stroke="#806020" stroke-width="1.6"/></svg>
<div class="A" style="left:542px;top:148px;font-size:9.8px;line-height:12px;color:#111;white-space:nowrap;transform:scaleX(.82);transform-origin:0 0">*C:\xampp\htdocs\crud\form.php - Notepad++</div>
<!-- menu -->
<div class="mi" style="left:527.5px">File</div>
<div class="mi" style="left:548.5px">Edit</div>
<div class="mi" style="left:571.5px">Search</div>
<div class="mi" style="left:604px">View</div>
<div class="mi" style="left:630px">Encoding</div>
<div class="mi" style="left:672.5px">Language</div>
<div class="mi" style="left:716px">Settings</div>
<div class="mi" style="left:754px">Tools</div>
<div class="mi" style="left:781.5px">Macro</div>
<div class="mi" style="left:813.5px">Run</div>
<div class="mi" style="left:836.5px">Plugins</div>
<div class="mi" style="left:872.5px">Window</div>
<div class="mi" style="left:910px">?</div>
<!-- toolbar -->
<div class="A" style="left:523px;top:178px;width:757px;height:17px;background:#fff;border-top:1px solid #eaeaea;border-bottom:1px solid #d8d8d8"></div>
<svg class="A" style="left:523px;top:178px" width="520" height="17" viewBox="523 178 520 17">
<!-- new -->
<path d="M527.5 180.5 H533 L536.5 184 V190.5 H527.5Z" fill="#fdfdfd" stroke="#c0c0c0"/>
<circle cx="534.5" cy="189" r="2.6" fill="#3c9a3c" stroke="#fff" stroke-width=".6"/>
<!-- open -->
<path d="M544.5 180.5 H550 L551.5 182 V188 H544.5Z" fill="#e8f0fa" stroke="#90a8c8"/>
<path d="M541.5 184.5 H546 L547 185.5 H551.5 V190.5 H541.5Z" fill="#f6d77a" stroke="#c8a040"/>
<!-- save -->
<rect x="556.5" y="180.5" width="11" height="10" fill="#6a9ad8" stroke="#4a78b8"/>
<rect x="558.5" y="181" width="7" height="3" fill="#e6eef8"/>
<rect x="558" y="186" width="8" height="4" fill="#a8dca0"/>
<!-- save all -->
<rect x="572.5" y="180.5" width="8" height="7" fill="#7aa4d8" stroke="#4a78b8"/>
<rect x="574.5" y="183.5" width="8" height="7" fill="#6a9ad8" stroke="#4a78b8"/>
<rect x="576" y="187" width="5" height="3" fill="#8ed08e"/>
<!-- close -->
<path d="M588.5 180.5 H594 L596.5 183 V190.5 H588.5Z" fill="#fbfbfb" stroke="#b8b8b8"/>
<path d="M590 183 H594 M590 185 H594" stroke="#c8c8c8"/>
<circle cx="596" cy="189" r="2.7" fill="#f07830"/><rect x="594.3" y="188.5" width="3.4" height="1" fill="#fff"/>
<!-- close all -->
<path d="M602.5 181.5 H607 L611 185 V190.5 H602.5Z" fill="#f4f4f4" stroke="#c8c8c8"/>
<circle cx="611" cy="189" r="2.7" fill="#f07830"/><rect x="609.3" y="188.5" width="3.4" height="1" fill="#fff"/>
<!-- print -->
<rect x="620.5" y="180.5" width="6" height="4" fill="#e8f0f8" stroke="#90a0b8"/>
<rect x="618.5" y="184.5" width="10" height="5" fill="#c0c8d0" stroke="#707880"/>
<rect x="620" y="188.5" width="7" height="2" fill="#e0e0e0"/>
<rect x="633" y="180" width="1" height="12" fill="#c8c8c8"/>
<!-- cut -->
<path d="M642 180.5 L645 187 M647 180.5 L643 187" stroke="#7a7a7a" stroke-width="1.2"/>
<circle cx="641.5" cy="188.5" r="2" fill="none" stroke="#d03030" stroke-width="1.3"/><circle cx="645.5" cy="189" r="2" fill="none" stroke="#d03030" stroke-width="1.3"/>
<!-- copy -->
<path d="M654.5 180.5 H659 L660.5 182 V188 H654.5Z" fill="#e6eef8" stroke="#6a88b8"/>
<path d="M658.5 183.5 H663 L664.5 185 V190.5 H658.5Z" fill="#e6eef8" stroke="#6a88b8"/>
<!-- paste -->
<rect x="669.5" y="180.5" width="8" height="10" fill="#d8b070" stroke="#a07838"/>
<path d="M673.5 183.5 H678 L679.5 185 V190.5 H673.5Z" fill="#eef4fb" stroke="#7a98c0"/>
<rect x="684" y="180" width="1" height="12" fill="#c8c8c8"/>
<!-- undo -->
<path d="M692 183 H697 A3 3 0 0 1 697 189 H692" fill="none" stroke="#3aa83a" stroke-width="2.2"/>
<path d="M690 183 L693.5 180.5 V185.5Z" fill="#3aa83a"/>
<!-- redo -->
<path d="M714 183 H709 A3 3 0 0 0 709 189 H714" fill="none" stroke="#8a8a8a" stroke-width="2.2"/>
<path d="M716 183 L712.5 180.5 V185.5Z" fill="#8a8a8a"/>
<rect x="720" y="180" width="1" height="12" fill="#c8c8c8"/>
<!-- find -->
<rect x="727" y="183" width="8" height="7" rx="1" fill="#2a2a2a"/><rect x="728" y="181" width="2.5" height="3" fill="#3a3a3a"/><rect x="731.5" y="181" width="2.5" height="3" fill="#3a3a3a"/><rect x="728" y="186.5" width="6" height="1" fill="#cfcfcf"/>
<!-- replace -->
<text x="741" y="186" font-size="7" font-weight="bold" fill="#3a70c0" font-family="Liberation Sans">b</text>
<text x="746" y="191" font-size="7.5" font-weight="bold" fill="#3a80d0" font-family="Liberation Sans">a</text>
<rect x="756.5" y="180" width="1" height="12" fill="#c8c8c8"/>
<!-- zoom in/out -->
<circle cx="766" cy="184.5" r="3.8" fill="#dfe6ef" stroke="#b8c4d4" stroke-width=".8"/><path d="M768 186 L771 190" stroke="#3a9a3a" stroke-width="2"/>
<circle cx="781.5" cy="184.5" r="3.8" fill="#dfe6ef" stroke="#b8c4d4" stroke-width=".8"/><path d="M783.5 186 L786.5 190" stroke="#d04040" stroke-width="2"/>
<rect x="792" y="180" width="1" height="12" fill="#c8c8c8"/>
<!-- sync -->
<rect x="798.5" y="180.5" width="10" height="9" fill="#fbfbfb" stroke="#6a7890"/><rect x="799" y="181" width="9" height="2" fill="#8aa0c0"/><rect x="803" y="185" width="6" height="5" fill="#f0c860"/>
<rect x="813.5" y="180.5" width="10" height="9" fill="#fbfbfb" stroke="#6a7890"/><rect x="814" y="181" width="9" height="2" fill="#8aa0c0"/><rect x="818" y="185" width="6" height="5" fill="#f0c860"/>
<rect x="828" y="180" width="1" height="12" fill="#c8c8c8"/>
<!-- wrap highlighted -->
<rect x="832" y="178.5" width="15" height="15" fill="#cfe4f8" stroke="#98c0e8"/>
<path d="M834 182.5 H840 M834 185.5 H844 M834 188.5 H842" stroke="#6a7a90" stroke-width="1.3"/>
<!-- pilcrow -->
<path d="M853 181 H857 V191 M855 181 V191" stroke="#8a98b0" stroke-width="1.4"/><circle cx="853" cy="183" r="2" fill="#8a98b0"/>
<!-- indent guide highlighted -->
<rect x="863" y="178.5" width="15" height="15" fill="#cfe4f8" stroke="#98c0e8"/>
<path d="M866 180 V192" stroke="#3a3ab8" stroke-width="1.2"/><rect x="868" y="181.5" width="7" height="8" fill="#3a4ac0"/>
<!-- doc yellow -->
<rect x="880.5" y="181.5" width="10" height="9" fill="#eef2f8" stroke="#8a98a8"/><circle cx="885" cy="187" r="3" fill="#f0c040"/>
<!-- map -->
<rect x="895.5" y="180.5" width="10" height="10" fill="#d8c070" stroke="#505850"/><path d="M897 182 L904 189" stroke="#70a040" stroke-width="2"/>
<!-- func -->
<path d="M911.5 180.5 H918 L921 183.5 V190.5 H911.5Z" fill="#fafafa" stroke="#a0a0a0"/><path d="M917 181 Q913 181 914 186 Q914 190 911 190 M912 185 H916" fill="none" stroke="#d03030" stroke-width="1.4"/>
<!-- folder pink -->
<rect x="926.5" y="182.5" width="10" height="7" fill="#f4d0d8" stroke="#d8a0a8"/>
<!-- eye -->
<path d="M941 185.5 Q946.5 180 952 185.5 Q946.5 191 941 185.5Z" fill="#f4f4f4" stroke="#a8a8a8"/><circle cx="946.5" cy="185.5" r="2" fill="#2a4a8a"/>
<rect x="956" y="180" width="1" height="12" fill="#b8b8b8"/>
<!-- macro -->
<rect x="962.5" y="180.5" width="9" height="10" fill="#f6f6f6" stroke="#b0b0b0"/><circle cx="967" cy="185.5" r="2" fill="#c00000"/>
<rect x="978.5" y="180.5" width="9" height="10" fill="#f6f6f6" stroke="#b0b0b0"/><rect x="980.5" y="183" width="5" height="5" fill="#909090"/>
<rect x="993.5" y="180.5" width="8" height="10" fill="#f6f6f6" stroke="#b0b0b0"/><path d="M996 183 L999.5 185.5 L996 188Z" fill="#808080"/>
<rect x="1008.5" y="180.5" width="9" height="10" fill="#f0f4fa" stroke="#a8b8c8"/><path d="M1010 183 L1013 185.5 L1010 188Z M1013 183 L1016 185.5 L1013 188Z" fill="#3a6ad8"/>
<rect x="1023.5" y="180.5" width="8" height="8" fill="#b8b8b8" stroke="#707070"/><rect x="1026.5" y="183.5" width="7" height="7" fill="#c8c8c8" stroke="#707070"/>
</svg>

<!-- tab bar -->
<div class="A" style="left:523px;top:195px;width:757px;height:18px;background:#f0f0f0"></div>
<div class="ntab" style="left:525px;width:44px"><i></i><span>a.php</span><b></b></div>
<div class="ntab" style="left:570px;width:44px"><i></i><span>b.php</span><b></b></div>
<div class="ntab" style="left:614px;width:51px"><i></i><span>tablo.sql</span><b></b></div>
<div class="ntab" style="left:667px;width:60px"><i></i><span>baglan.php</span><b></b></div>
<div class="A" style="left:728px;top:196px;width:54px;height:16px;background:#f4f4f4;border-top:2px solid #f0a030;border-right:2px solid #8a8a8a"></div>
<div class="A" style="left:731px;top:199.5px;width:8px;height:8.5px;background:#f08080;border:1px solid #d04848"></div>
<div class="A" style="left:732.5px;top:203.5px;width:5px;height:3px;background:#fde0e0"></div>
<div class="A" style="left:740.5px;top:197px;font-size:8.2px;line-height:14px;color:#222;transform:scaleX(.85);transform-origin:0 0">form.php</div>
<svg class="A" style="left:771px;top:200.5px" width="8" height="8" viewBox="0 0 8 8"><rect x=".5" y=".5" width="7" height="7" fill="#e8c8d0" stroke="#b06080"/><path d="M2 2 L6 6 M6 2 L2 6" stroke="#c03060" stroke-width="1.3"/></svg>
<!-- editor -->
<div class="A" style="left:523px;top:212px;width:757px;height:508px;background:#fff;border-top:1px solid #646464;border-left:2px solid #b0b0b0"></div>
<div class="A" style="left:525px;top:213px;width:50px;height:507px;background:#e4e4e4"></div>
<div class="A" style="left:575px;top:213px;width:10px;height:507px;background:#f2f2f2"></div>
<div class="A" style="left:580px;top:213px;width:1px;height:507px;background:#8c8c8c"></div>
<div class="A" style="left:585px;top:213px;width:695px;height:62.5px;background:#f8f7f0"></div>
<div class="gd" style="left:630.3px;top:213.5px"></div>
<div class="gd" style="left:630.3px;top:234.2px"></div>
<div class="gd" style="left:630.3px;top:316.9px"></div>
<div class="gd" style="left:630.3px;top:337.6px"></div>
<div class="gd" style="left:630.3px;top:358.3px"></div>
<div class="gd" style="left:630.3px;top:379.0px"></div>
<div class="gd" style="left:630.3px;top:399.7px"></div>
<div class="gd" style="left:630.3px;top:420.4px"></div>
<div class="gd" style="left:630.3px;top:441.1px"></div>
<div class="gd" style="left:675.7px;top:441.1px"></div>
<div class="gd" style="left:721.0px;top:441.1px"></div>
<div class="gd" style="left:766.3px;top:441.1px"></div>
<div class="gd" style="left:630.3px;top:461.8px"></div>
<div class="gd" style="left:630.3px;top:482.5px"></div>
<div class="gd" style="left:675.7px;top:482.5px"></div>
<div class="gd" style="left:721.0px;top:482.5px"></div>
<div class="gd" style="left:766.3px;top:482.5px"></div>
<div class="gd" style="left:811.7px;top:482.5px"></div>
<div class="gd" style="left:630.3px;top:503.2px"></div>
<div class="gd" style="left:675.7px;top:503.2px"></div>
<div class="gd" style="left:721.0px;top:503.2px"></div>
<div class="gd" style="left:766.3px;top:503.2px"></div>
<div class="gd" style="left:811.7px;top:503.2px"></div>
<div class="gd" style="left:630.3px;top:523.9px"></div>
<div class="gd" style="left:675.7px;top:523.9px"></div>
<div class="gd" style="left:721.0px;top:523.9px"></div>
<div class="gd" style="left:766.3px;top:523.9px"></div>
<div class="gd" style="left:811.7px;top:523.9px"></div>
<div class="gd" style="left:630.3px;top:544.5px"></div>
<div class="gd" style="left:675.7px;top:544.5px"></div>
<div class="gd" style="left:721.0px;top:544.5px"></div>
<div class="gd" style="left:766.3px;top:544.5px"></div>
<div class="gd" style="left:630.3px;top:565.2px"></div>
<div class="gd" style="left:630.3px;top:585.9px"></div>
<div class="gd" style="left:675.7px;top:585.9px"></div>
<div class="gd" style="left:721.0px;top:585.9px"></div>
<div class="gd" style="left:766.3px;top:585.9px"></div>
<div class="gd" style="left:811.7px;top:585.9px"></div>
<div class="gd" style="left:630.3px;top:606.6px"></div>
<div class="gd" style="left:675.7px;top:606.6px"></div>
<div class="gd" style="left:721.0px;top:606.6px"></div>
<div class="gd" style="left:766.3px;top:606.6px"></div>
<div class="gd" style="left:811.7px;top:606.6px"></div>
<div class="gd" style="left:630.3px;top:627.3px"></div>
<div class="gd" style="left:675.7px;top:627.3px"></div>
<div class="gd" style="left:721.0px;top:627.3px"></div>
<div class="gd" style="left:766.3px;top:627.3px"></div>
<div class="gd" style="left:811.7px;top:627.3px"></div>
<div class="gd" style="left:630.3px;top:648.0px"></div>
<div class="gd" style="left:675.7px;top:648.0px"></div>
<div class="gd" style="left:721.0px;top:648.0px"></div>
<div class="gd" style="left:766.3px;top:648.0px"></div>
<div class="gd" style="left:811.7px;top:648.0px"></div>
<div class="gd" style="left:630.3px;top:668.7px"></div>
<div class="gd" style="left:675.7px;top:668.7px"></div>
<div class="gd" style="left:721.0px;top:668.7px"></div>
<div class="gd" style="left:766.3px;top:668.7px"></div>
<div class="gd" style="left:811.7px;top:668.7px"></div>
<div class="gd" style="left:630.3px;top:689.4px"></div>
<div class="gd" style="left:675.7px;top:689.4px"></div>
<div class="gd" style="left:721.0px;top:689.4px"></div>
<div class="gd" style="left:766.3px;top:689.4px"></div>
<div class="gd" style="left:630.3px;top:710.1px"></div>
<div class="fk" style="top:265.2px"></div>
<div class="fk" style="top:285.9px"></div>
<div class="fk" style="top:306.6px"></div>
<div class="fk" style="top:554.8px"></div>
<div class="fk" style="top:699.7px"></div>
<div class="fb" style="top:322.8px"></div>
<div class="fb" style="top:467.6px"></div>
<div class="fb" style="top:571.0px"></div>
<div class="fb" style="top:715.9px"></div>
<div class="A" style="left:580px;top:580.2px;width:1px;height:119.1px;background:#a88888"></div>
<div id="nums">52
53
54
55
56
57
58
59
60
61
62
63
64
65
66
67
68
69
70
71
72
73
74
75
76</div>
<div id="code">        <span class="k">echo</span> <span class="g">"&lt;/tr&gt;"</span><span class="sb">;</span>

    <span class="pu">}</span>
<span class="pe">?&gt;</span>
<span class="t">&lt;/table&gt;</span>
        <span class="t">&lt;form</span> <span class="a">action</span>=<span class="s">""</span> <span class="a">method</span>=<span class="s">"POST"</span> <span class="a">enctype</span>=<span class="s">"multipart/form-data"</span><span class="t">&gt;</span>
        <span class="b">Metin Alanı </span><span class="t">&lt;input</span> <span class="a">type</span>=<span class="s">"text"</span> <span class="a">name</span>=<span class="s">"fe_metin"</span> <span class="a">value</span>=<span class="s">""</span>
        <span class="b">Gizli Alan </span><span class="t">&lt;input</span> <span class="a">type</span>=<span class="s">"hidden"</span> <span class="a">name</span>=<span class="s">"fe_hidden"</span> <span class="a">value</span>=<span class="s">"gizli"</span>
        <span class="b">Şifre </span><span class="t">&lt;input</span> <span class="a">type</span>=<span class="s">"password"</span> <span class="a">name</span>=<span class="s">"fe_sifre"</span> <span class="a">value</span>=<span class="s">"123"</span>
        <span class="b">Tik Kutusu </span><span class="t">&lt;input</span> <span class="a">type</span>=<span class="s">"checkbox"</span> <span class="a">name</span>=<span class="s">"fe_tik"</span> <span class="a">value</span>=<span class="s">"1"</span>
        <span class="b">Radio Düğme </span><span class="t">&lt;input</span> <span class="a">type</span>=<span class="s">"radio"</span> <span class="a">name</span>=<span class="s">"fe_radyo"</span> <span class="a">value</span>=<span class="s">"1"</span>
                    <span class="t">&lt;input</span> <span class="a">type</span>=<span class="s">"radio"</span> <span class="a">name</span>=<span class="s">"fe_radyo"</span> <span class="a">value</span>=<span class="s">"2"</span>
        <span class="b">Seçim Kutusu</span><span class="t">&lt;select</span> <span class="a">name</span>=<span class="s">"fe_secim"</span><span class="t">&gt;</span>
                        <span class="t">&lt;option</span> <span class="a">value</span>=<span class="s">"10"</span><span class="t">&gt;</span><span class="b">Balıkesir</span><span class="t">&lt;/option&gt;</span>
                        <span class="t">&lt;option</span> <span class="a">value</span>=<span class="s">"34"</span><span class="t">&gt;</span><span class="b">İstanbul</span><span class="t">&lt;/option&gt;</span>
                        <span class="t">&lt;option</span> <span class="a">value</span>=<span class="s">"16"</span><span class="t">&gt;</span><span class="b">Bursa</span><span class="t">&lt;/option&gt;</span>
                    <span class="t">&lt;/select&gt;&lt;br&gt;</span>
        <span class="b">Çoklu Seçim</span><span class="t">&lt;select</span> <span class="a">name</span>=<span class="s">"fe_coklu_secim[]"</span> <span class="a">size</span>=<span class="s">"5"</span> <span class="a">multiple</span><span class="t">&gt;</span>
                        <span class="t">&lt;option</span> <span class="a">value</span>=<span class="s">"10"</span><span class="t">&gt;</span><span class="b">Balıkesir</span><span class="t">&lt;/option&gt;</span>
                        <span class="t">&lt;option</span> <span class="a">value</span>=<span class="s">"34"</span><span class="t">&gt;</span><span class="b">İstanbul</span><span class="t">&lt;/option&gt;</span>
                        <span class="t">&lt;option&gt;</span><span class="b">Bursa</span><span class="t">&lt;/option&gt;</span>
                        <span class="t">&lt;option&gt;</span><span class="b">İzmir</span><span class="t">&lt;/option&gt;</span>
                        <span class="t">&lt;option&gt;</span><span class="b">Manisa</span><span class="t">&lt;/option&gt;</span>
                    <span class="t">&lt;/select&gt;&lt;br&gt;</span>
        <span class="b">Metin Kutusu </span><span class="t">&lt;textarea</span> <span class="a">name</span>=<span class="s">"fe_metin_kutusu"</span><span class="t">&gt;</span></div>
<svg class="A" style="left:975px;top:503px" width="7" height="14" viewBox="0 0 7 14"><path d="M1 1 H6 M1 13 H6 M3.5 1 V13" stroke="#606060" stroke-width="1"/></svg>
</body></html>
